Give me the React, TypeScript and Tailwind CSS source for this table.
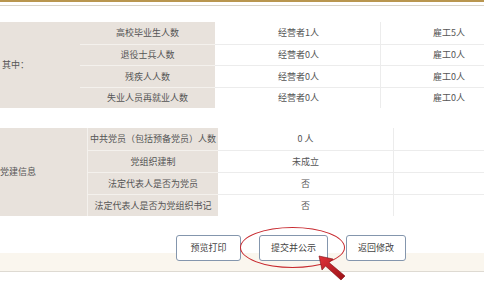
import React from 'react';

const font = { fontFamily: '"Noto Sans CJK SC", "Liberation Sans", sans-serif' };

const workers = [
  { label: '高校毕业生人数', owner: '经营者1人', staff: '雇工5人' },
  { label: '退役士兵人数', owner: '经营者0人', staff: '雇工0人' },
  { label: '残疾人人数', owner: '经营者0人', staff: '雇工0人' },
  { label: '失业人员再就业人数', owner: '经营者0人', staff: '雇工0人' },
];

const party = [
  { label: '中共党员（包括预备党员）人数', value: '0 人' },
  { label: '党组织建制', value: '未成立' },
  { label: '法定代表人是否为党员', value: '否' },
  { label: '法定代表人是否为党组织书记', value: '否' },
];

function ArrowPointer() {
  return (
    <svg width="34" height="30" viewBox="0 0 34 30" className="absolute left-[314px] top-[252px]">
      <defs>
        <linearGradient id="ar" x1="0" y1="0" x2="1" y2="1">
          <stop offset="0" stopColor="#e0343a" />
          <stop offset="1" stopColor="#9c1016" />
        </linearGradient>
      </defs>
      <path d="M5 4 L19 7 L15 10.5 L31 24 L27 28 L11.5 14 L8 18 Z" fill="url(#ar)" stroke="#7a0c10" strokeWidth="0.6" />
    </svg>
  );
}

export default function App() {
  return (
    <div className="relative w-[484px] h-[300px] overflow-hidden bg-white text-[#555] text-[9px]" style={font}>
      {/* header rule */}
      <div className="h-[2px] bg-[#b9964f]" />
      <div className="h-[3px]" />
      <div className="h-[1px] bg-[#d9d4c8]" />

      {/* employment table */}
      <div className="mt-[16px] w-[540px] grid grid-cols-[80px_135px_165px_160px]">
        <div className="row-span-4 bg-[#e8e2dc] flex items-center pl-[2px]">其中：</div>
        {workers.map((r, i) => (
          <React.Fragment key={r.label}>
            <div className={`h-[21.5px] bg-[#e8e2dc] flex items-center justify-center ${i > 0 ? 'border-t border-[#f4f1ed]' : ''}`}>
              {r.label}
            </div>
            <div className={`h-[21.5px] flex items-center pl-[63px] border-[#ececec] ${i > 0 ? 'border-t' : ''}`}>
              {r.owner}
            </div>
            <div className={`h-[21.5px] flex items-center pl-[52px] border-l border-[#ececec] ${i > 0 ? 'border-t' : ''}`}>
              {r.staff}
            </div>
          </React.Fragment>
        ))}
      </div>

      {/* party table */}
      <div className="mt-[20px] w-[540px] grid grid-cols-[87px_131px_175px_147px]">
        <div className="row-span-4 bg-[#e8e2dc] flex items-center">党建信息</div>
        {party.map((r, i) => (
          <React.Fragment key={r.label}>
            <div className={`h-[22px] bg-[#e8e2dc] flex items-center justify-center border-l border-[#f4f1ed] ${i > 0 ? 'border-t' : ''}`}>
              {r.label}
            </div>
            <div className={`h-[22px] flex items-center justify-center border-[#ececec] ${i > 0 ? 'border-t' : ''}`}>
              {r.value}
            </div>
            <div className={`h-[22px] border-l border-[#ececec] ${i > 0 ? 'border-t' : ''}`} />
          </React.Fragment>
        ))}
      </div>

      {/* actions */}
      <div className="mt-[19px] h-[37px] border-b border-[#dedad2] bg-[linear-gradient(to_bottom,#ffffff_18px,#faf6ee_18px)]">
        <div className="flex pl-[176px] gap-[18px]">
          {['预览打印', '提交并公示', '返回修改'].map((t, i) => (
            <button
              key={t}
              className={`h-[26px] ${i === 1 ? 'w-[69px]' : i === 0 ? 'w-[65px]' : 'w-[60px]'} bg-white border border-[#8496ad] rounded-[3px] text-[9px] text-[#444] flex items-center justify-center`}
            >
              {t}
            </button>
          ))}
        </div>
      </div>

      {/* highlight */}
      <div className="absolute left-[240px] top-[227px] w-[105px] h-[41px] rounded-[50%] border-[1.5px] border-[#c7282e]" />
      <ArrowPointer />
    </div>
  );
}
